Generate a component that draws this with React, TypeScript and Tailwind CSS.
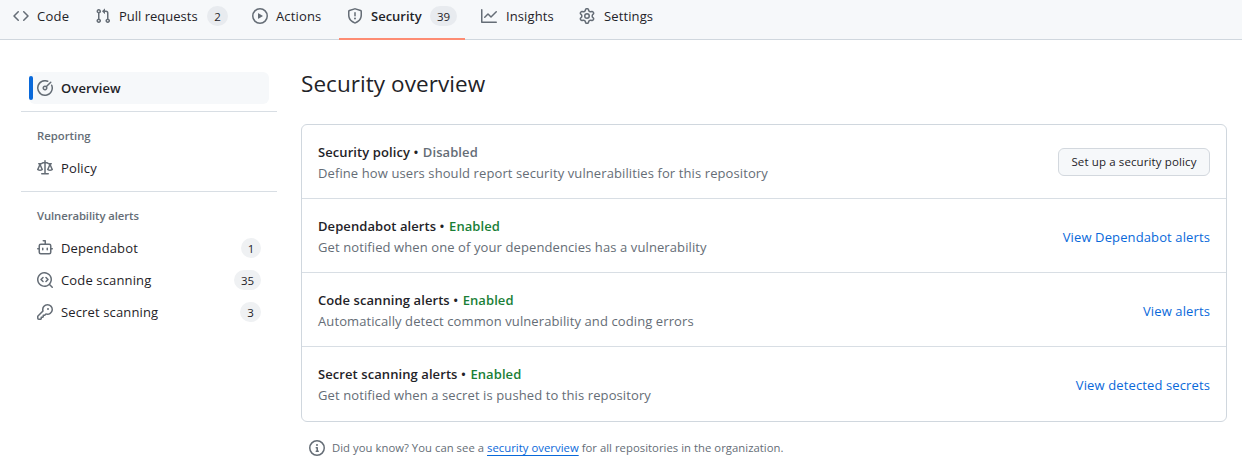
import type { ReactNode } from "react";

const ICONS = {
  code: "m11.28 3.22 4.25 4.25a.75.75 0 0 1 0 1.06l-4.25 4.25a.749.749 0 0 1-1.275-.326.749.749 0 0 1 .215-.734L13.94 8l-3.72-3.72a.749.749 0 0 1 .326-1.275.749.749 0 0 1 .734.215Zm-6.56 0a.751.751 0 0 1 1.042.018.751.751 0 0 1 .018 1.042L2.06 8l3.72 3.72a.749.749 0 0 1-.326 1.275.749.749 0 0 1-.734-.215L.47 8.53a.75.75 0 0 1 0-1.06Z",
  pull: "M1.5 3.25a2.25 2.25 0 1 1 3 2.122v5.256a2.251 2.251 0 1 1-1.5 0V5.372A2.25 2.25 0 0 1 1.5 3.25Zm5.677-.177L9.573.677A.25.25 0 0 1 10 .854V2.5h1A2.5 2.5 0 0 1 13.5 5v5.628a2.251 2.251 0 1 1-1.5 0V5a1 1 0 0 0-1-1h-1v1.646a.25.25 0 0 1-.427.177L7.177 3.427a.25.25 0 0 1 0-.354ZM3.75 2.5a.75.75 0 1 0 0 1.5.75.75 0 0 0 0-1.5Zm0 9.5a.75.75 0 1 0 0 1.5.75.75 0 0 0 0-1.5Zm8.25.75a.75.75 0 1 0 1.5 0 .75.75 0 0 0-1.5 0Z",
  play: "M8 0a8 8 0 1 1 0 16A8 8 0 0 1 8 0ZM1.5 8a6.5 6.5 0 1 0 13 0 6.5 6.5 0 0 0-13 0Zm4.879-2.773 4.264 2.559a.25.25 0 0 1 0 .428l-4.264 2.559A.25.25 0 0 1 6 10.559V5.442a.25.25 0 0 1 .379-.215Z",
  shield: "M7.467.133a1.748 1.748 0 0 1 1.066 0l5.25 1.68A1.75 1.75 0 0 1 15 3.48V7c0 1.566-.32 3.182-1.303 4.682-.983 1.498-2.585 2.813-5.032 3.855a1.697 1.697 0 0 1-1.33 0c-2.447-1.042-4.049-2.357-5.032-3.855C1.32 10.182 1 8.566 1 7V3.48a1.75 1.75 0 0 1 1.217-1.667Zm.61 1.429a.25.25 0 0 0-.153 0l-5.25 1.68a.25.25 0 0 0-.174.238V7c0 1.358.275 2.666 1.057 3.86.784 1.194 2.121 2.34 4.366 3.297a.196.196 0 0 0 .154 0c2.245-.956 3.582-2.104 4.366-3.298C13.225 9.666 13.5 8.36 13.5 7V3.48a.251.251 0 0 0-.174-.237l-5.25-1.68ZM8.75 4.75v3a.75.75 0 0 1-1.5 0v-3a.75.75 0 0 1 1.5 0ZM9 10.5a1 1 0 1 1-2 0 1 1 0 0 1 2 0Z",
  graph: "M1.5 1.75V13.5h13.75a.75.75 0 0 1 0 1.5H.75a.75.75 0 0 1-.75-.75V1.75a.75.75 0 0 1 1.5 0Zm14.28 2.53-5.25 5.25a.75.75 0 0 1-1.06 0L7 7.06 4.28 9.78a.751.751 0 0 1-1.042-.018.751.751 0 0 1-.018-1.042l3.25-3.25a.75.75 0 0 1 1.06 0L10 7.94l4.72-4.72a.751.751 0 0 1 1.042.018.751.751 0 0 1 .018 1.042Z",
  gear: "M8 0a8.2 8.2 0 0 1 .701.031C9.444.095 9.99.645 10.16 1.29l.288 1.107c.018.066.079.158.212.224.231.114.454.243.668.386.123.082.233.09.299.071l1.103-.303c.644-.176 1.392.021 1.82.63.27.385.506.792.704 1.218.315.675.111 1.422-.364 1.891l-.814.806c-.049.048-.098.147-.088.294.016.257.016.515 0 .772-.01.147.038.246.088.294l.814.806c.475.469.679 1.216.364 1.891a7.977 7.977 0 0 1-.704 1.217c-.428.61-1.176.807-1.82.63l-1.102-.302c-.067-.019-.177-.011-.3.071a5.909 5.909 0 0 1-.668.386c-.133.066-.194.158-.211.224l-.29 1.106c-.168.646-.715 1.196-1.458 1.26a8.006 8.006 0 0 1-1.402 0c-.743-.064-1.289-.614-1.458-1.26l-.289-1.106c-.018-.066-.079-.158-.212-.224a5.738 5.738 0 0 1-.668-.386c-.123-.082-.233-.09-.299-.071l-1.103.303c-.644.176-1.392-.021-1.82-.63a8.12 8.12 0 0 1-.704-1.218c-.315-.675-.111-1.422.363-1.891l.815-.806c.05-.048.098-.147.088-.294a6.214 6.214 0 0 1 0-.772c.01-.147-.038-.246-.088-.294l-.815-.806C.635 6.045.431 5.298.746 4.623a7.92 7.92 0 0 1 .704-1.217c.428-.61 1.176-.807 1.82-.63l1.102.302c.067.019.177.011.3-.071.214-.143.437-.272.668-.386.133-.066.194-.158.211-.224l.29-1.106C6.009.645 6.556.095 7.299.03 7.53.01 7.764 0 8 0Zm-.571 1.525c-.036.003-.108.036-.137.146l-.289 1.105c-.147.561-.549.967-.998 1.189-.173.086-.34.183-.5.29-.417.278-.97.423-1.529.27l-1.103-.303c-.109-.03-.175.016-.195.045-.22.312-.412.644-.573.99-.014.031-.021.11.059.19l.815.806c.411.406.562.957.53 1.456a4.709 4.709 0 0 0 0 .582c.032.499-.119 1.05-.53 1.456l-.815.806c-.081.08-.073.159-.059.19.162.346.353.677.573.989.02.03.085.076.195.046l1.102-.303c.56-.153 1.113-.008 1.53.27.161.107.328.204.501.29.447.222.85.629.997 1.189l.289 1.105c.029.109.101.143.137.146a6.6 6.6 0 0 0 1.142 0c.036-.003.108-.036.137-.146l.289-1.105c.147-.561.549-.967.998-1.189.173-.086.34-.183.5-.29.417-.278.97-.423 1.529-.27l1.103.303c.109.029.175-.016.195-.045.22-.313.411-.644.573-.99.014-.031.021-.11-.059-.19l-.815-.806c-.411-.406-.562-.957-.53-1.456a4.709 4.709 0 0 0 0-.582c-.032-.499.119-1.05.53-1.456l.815-.806c.081-.08.073-.159.059-.19a6.464 6.464 0 0 0-.573-.989c-.02-.03-.085-.076-.195-.046l-1.102.303c-.56.153-1.113.008-1.53-.27a4.44 4.44 0 0 0-.501-.29c-.447-.222-.85-.629-.997-1.189l-.289-1.105c-.029-.11-.101-.143-.137-.146a6.6 6.6 0 0 0-1.142 0ZM11 8a3 3 0 1 1-6 0 3 3 0 0 1 6 0ZM9.5 8a1.5 1.5 0 1 0-3.001.001A1.5 1.5 0 0 0 9.5 8Z",
  meter: "M8 1.5a6.5 6.5 0 1 0 6.016 4.035.75.75 0 0 1 1.388-.57 8 8 0 1 1-4.37-4.37.75.75 0 0 1-.569 1.389A6.473 6.473 0 0 0 8 1.5Zm6.28.22a.75.75 0 0 1 0 1.06l-4.063 4.064a2.5 2.5 0 1 1-1.06-1.06L13.22 1.72a.75.75 0 0 1 1.06 0ZM7 8a1 1 0 1 0 2 0 1 1 0 0 0-2 0Z",
  law: "M8.75.75V2h.985c.304 0 .603.08.867.231l1.29.736c.038.022.08.033.124.033h2.234a.75.75 0 0 1 0 1.5h-.427l2.111 4.692a.75.75 0 0 1-.154.838l-.53-.53.529.531-.001.002-.002.002-.006.006-.006.005-.01.01-.045.04c-.21.176-.441.327-.686.45C14.556 10.78 13.88 11 13 11a4.498 4.498 0 0 1-2.023-.454 3.544 3.544 0 0 1-.686-.45l-.045-.04-.016-.015-.006-.006-.004-.004v-.001a.75.75 0 0 1-.154-.838L12.178 4.5h-.162c-.305 0-.604-.079-.868-.231l-1.29-.736a.245.245 0 0 0-.124-.033H8.75V13h2.5a.75.75 0 0 1 0 1.5h-6.5a.75.75 0 0 1 0-1.5h2.5V3.5h-.984a.245.245 0 0 0-.124.033l-1.289.737c-.265.15-.564.23-.869.23h-.162l2.112 4.692a.75.75 0 0 1-.154.838l-.53-.53.529.531-.001.002-.002.002-.006.006-.016.015-.045.04c-.21.176-.441.327-.686.45C4.556 10.78 3.88 11 3 11a4.498 4.498 0 0 1-2.023-.454 3.544 3.544 0 0 1-.686-.45l-.045-.04-.016-.015-.006-.006-.004-.004v-.001a.75.75 0 0 1-.154-.838L2.178 4.5H1.75a.75.75 0 0 1 0-1.5h2.234a.249.249 0 0 0 .125-.033l1.288-.737c.265-.15.564-.23.869-.23h.984V.75a.75.75 0 0 1 1.5 0Zm2.945 8.477c.285.135.718.273 1.305.273s1.02-.138 1.305-.273L13 6.327Zm-10 0c.285.135.718.273 1.305.273s1.02-.138 1.305-.273L3 6.327Z",
  bot: "M5.75 7.5a.75.75 0 0 1 .75.75v1.5a.75.75 0 0 1-1.5 0v-1.5a.75.75 0 0 1 .75-.75Zm5.25.75a.75.75 0 0 0-1.5 0v1.5a.75.75 0 0 0 1.5 0v-1.5ZM6.25 0h2A.75.75 0 0 1 9 .75V3.5h3.25a2.25 2.25 0 0 1 2.25 2.25V8h.75a.75.75 0 0 1 0 1.5h-.75v2.75a2.25 2.25 0 0 1-2.25 2.25h-8.5a2.25 2.25 0 0 1-2.25-2.25V9.5H.75a.75.75 0 0 1 0-1.5h.75V5.75A2.25 2.25 0 0 1 3.75 3.5H7.5v-2H6.25a.75.75 0 0 1 0-1.5ZM3 5.75v6.5c0 .414.336.75.75.75h8.5a.75.75 0 0 0 .75-.75v-6.5a.75.75 0 0 0-.75-.75h-8.5a.75.75 0 0 0-.75.75Z",
  scan: "M8.47 4.97a.75.75 0 0 0 0 1.06L9.94 7.5 8.47 8.97a.75.75 0 1 0 1.06 1.06l2-2a.75.75 0 0 0 0-1.06l-2-2a.75.75 0 0 0-1.06 0ZM6.53 6.03a.75.75 0 0 0-1.06-1.06l-2 2a.75.75 0 0 0 0 1.06l2 2a.75.75 0 1 0 1.06-1.06L5.06 7.5l1.47-1.47ZM12.246 13.307a7.501 7.501 0 1 1 1.06-1.06l2.474 2.473a.749.749 0 0 1-.326 1.275.749.749 0 0 1-.734-.215ZM1.5 7.5a6.002 6.002 0 0 0 3.608 5.504 6.002 6.002 0 0 0 6.486-1.117.748.748 0 0 1 .292-.293A6 6 0 1 0 1.5 7.5Z",
  key: "M10.5 0a5.499 5.499 0 1 1-1.288 10.848l-.932.932a.749.749 0 0 1-.53.22H7v.75a.749.749 0 0 1-.22.53l-.5.5a.749.749 0 0 1-.53.22H5v.75a.749.749 0 0 1-.22.53l-.5.5a.749.749 0 0 1-.53.22h-2A1.75 1.75 0 0 1 0 14.25v-2c0-.199.079-.389.22-.53l4.932-4.932A5.5 5.5 0 0 1 10.5 0Zm-4 5.5c-.001.431.069.86.205 1.269a.75.75 0 0 1-.181.768L1.5 12.56v1.69c0 .138.112.25.25.25h1.69l.06-.06v-1.19a.75.75 0 0 1 .75-.75h1.19l.06-.06v-1.19a.75.75 0 0 1 .75-.75h1.19l1.023-1.025a.75.75 0 0 1 .768-.18A4 4 0 1 0 6.5 5.5ZM11 6a1 1 0 1 1 0-2 1 1 0 0 1 0 2Z",
  info: "M0 8a8 8 0 1 1 16 0A8 8 0 0 1 0 8Zm8-6.5a6.5 6.5 0 1 0 0 13 6.5 6.5 0 0 0 0-13ZM6.5 7.75A.75.75 0 0 1 7.25 7h1a.75.75 0 0 1 .75.75v2.75h.25a.75.75 0 0 1 0 1.5h-2a.75.75 0 0 1 0-1.5h.25v-2h-.25a.75.75 0 0 1-.75-.75ZM8 6a1 1 0 1 1 0-2 1 1 0 0 1 0 2Z",
};

type IconName = keyof typeof ICONS;

function Icon({ name }: { name: IconName }) {
  return (
    <svg viewBox="0 0 16 16" className="size-4 shrink-0 fill-[#656d76]" aria-hidden="true">
      <path d={ICONS[name]} />
    </svg>
  );
}

function Tab({ icon, width, count, active, children }: { icon: IconName; width: string; count?: ReactNode; active?: boolean; children: string }) {
  return (
    <a className={`flex h-10 items-start border-b-2 px-2 pt-2 ${active ? "border-[#fd8c73] font-semibold" : "border-transparent"}`}>
      <Icon name={icon} />
      <span className={`ml-2 h-4 leading-4 whitespace-nowrap ${width}`}>{children}</span>
      {count}
    </a>
  );
}

function SideItem({ icon, count, countWidth, children }: { icon: IconName; count?: number; countWidth?: string; children: string }) {
  return (
    <a className="flex h-8 items-center pr-2 pl-2">
      <Icon name={icon} />
      <span className="ml-2 flex-1 pt-0.5 tracking-[0.14px]">{children}</span>
      {count !== undefined && (
        <span className={`flex h-5 items-center justify-center rounded-full bg-[#eff1f3] pt-px text-[11.5px] font-medium ${countWidth}`}>{count}</span>
      )}
    </a>
  );
}

function Row({ title, status, text, action }: { title: string; status: "Enabled" | "Disabled"; text: string; action: ReactNode }) {
  return (
    <li className="flex h-[74px] items-center justify-between border-b border-[#d8dee4] px-4 last:border-b-0">
      <div className="pt-0.5 leading-[21px]">
        <h3 className="text-[13px] font-semibold tracking-[0.08px]">
          {title} <span className="mr-px">•</span>{" "}
          <span className={status === "Enabled" ? "text-[#1a7f37]" : "text-[#656d76]"}>{status}</span>
        </h3>
        <p className="tracking-[0.1px] text-[#656d76]">{text}</p>
      </div>
      {action}
    </li>
  );
}

function ActionLink({ children }: { children: string }) {
  return <a className="pt-1 tracking-[0.12px] text-[#0969da]">{children}</a>;
}

export default function App() {
  return (
    <div className="h-[462px] overflow-hidden bg-white font-['Open_Sans',sans-serif] text-[13px] text-[#1f2328]">
      <nav className="h-10 border-b border-[#d0d7de] bg-[#f6f8fa] pl-[5px]">
        <div className="flex gap-2">
          <Tab icon="code" width="w-[34px] tracking-[0.3px]">Code</Tab>
          <Tab icon="pull" width="w-[80px]" count={<span className="-mt-0.5 ml-2 flex h-5 w-[21px] items-center justify-center rounded-full bg-[#e8ebef] pt-px text-[11.5px]">2</span>}>Pull requests</Tab>
          <Tab icon="play" width="w-[47px] tracking-[0.15px]">Actions</Tab>
          <Tab icon="shield" width="w-[51px]" active count={<span className="-mt-0.5 ml-2 flex h-5 w-[27px] items-center justify-center rounded-full bg-[#e8ebef] pt-px text-[11.5px] font-medium">39</span>}>Security</Tab>
          <Tab icon="graph" width="w-[50px] pl-px tracking-[0.1px]">Insights</Tab>
          <Tab icon="gear" width="w-[51px] pl-px tracking-[0.12px]">Settings</Tab>
        </div>
      </nav>
      <div className="flex pl-[21px]">
        <aside className="w-64 shrink-0 pt-8">
          <div className="mx-2 flex h-8 items-center rounded-md bg-[#f6f8fa]">
            <span className="h-6 w-1 rounded-md bg-[#0969da]" />
            <span className="ml-1 flex items-center gap-2 font-semibold">
              <Icon name="meter" />
              <span className="pt-0.5 tracking-[0.1px]">Overview</span>
            </span>
          </div>
          <hr className="mt-[7px] border-[#d8dee4]" />
          <h3 className="mt-4 ml-4 text-[11.3px] leading-4 font-semibold text-[#656d76]">Reporting</h3>
          <div className="mx-2 mt-2">
            <SideItem icon="law">Policy</SideItem>
          </div>
          <hr className="mt-[7px] border-[#d8dee4]" />
          <h3 className="mt-4 ml-4 text-[11.3px] leading-4 font-semibold tracking-[-0.08px] text-[#656d76]">Vulnerability alerts</h3>
          <div className="mx-2 mt-2">
            <SideItem icon="bot" count={1} countWidth="w-5">Dependabot</SideItem>
            <SideItem icon="scan" count={35} countWidth="w-[27px]">Code scanning</SideItem>
            <SideItem icon="key" count={3} countWidth="w-[21px]">Secret scanning</SideItem>
          </div>
        </aside>
        <main className="ml-6 w-[926px] pt-[26px]">
          <h1 className="h-9 text-[22.5px] leading-9 tracking-[0.06px]">Security overview</h1>
          <ul className="mt-[22px] rounded-md border border-[#d0d7de]">
            <Row
              title="Security policy"
              status="Disabled"
              text="Define how users should report security vulnerabilities for this repository"
              action={<button className="h-7 w-[152px] rounded-md border border-[#d3d8de] bg-[#f6f8fa] pt-px text-[11.5px] font-medium tracking-[0.12px]">Set up a security policy</button>}
            />
            <Row title="Dependabot alerts" status="Enabled" text="Get notified when one of your dependencies has a vulnerability" action={<ActionLink>View Dependabot alerts</ActionLink>} />
            <Row title="Code scanning alerts" status="Enabled" text="Automatically detect common vulnerability and coding errors" action={<ActionLink>View alerts</ActionLink>} />
            <Row title="Secret scanning alerts" status="Enabled" text="Get notified when a secret is pushed to this repository" action={<ActionLink>View detected secrets</ActionLink>} />
          </ul>
          <p className="mt-4 ml-2 flex items-center text-[11.3px] leading-[18px] tracking-[0.03px] text-[#656d76]">
            <Icon name="info" />
            <span className="ml-[7px] pt-px">
              Did you know? You can see a <a className="text-[#0969da] underline underline-offset-[3px]">security overview</a> for all repositories in the organization.
            </span>
          </p>
        </main>
      </div>
    </div>
  );
}
